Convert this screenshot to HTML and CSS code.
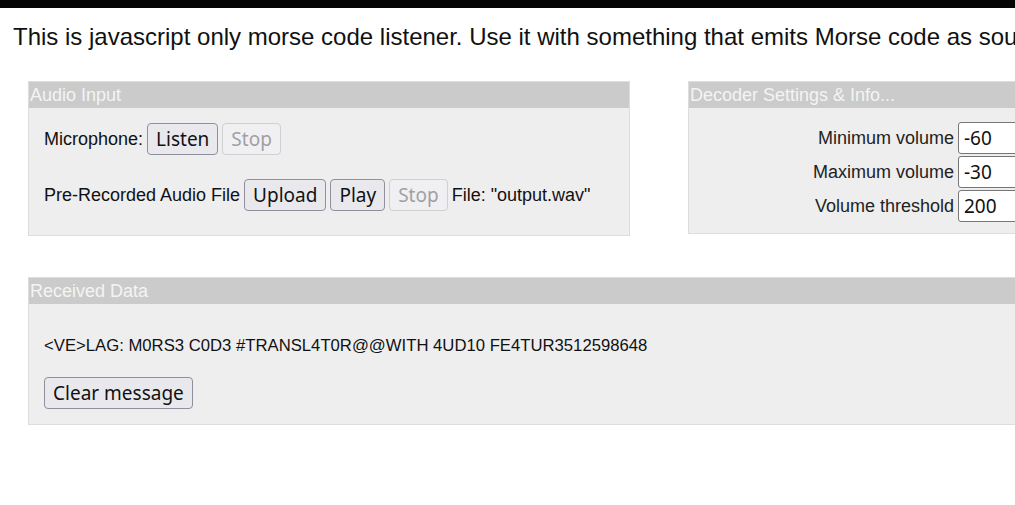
FILE: index.html
```html
<!DOCTYPE html>
<html>
<head>
<meta charset="utf-8">
<link rel="stylesheet" href="styles.css">
</head>
<body>
<div class="topbar"></div>
<p class="intro">This is javascript only morse code listener. Use it with something that emits Morse code as sound. Just let it listen and it will decode the message.</p>
<div class="row">
  <section class="panel audio">
    <div class="panel-head">Audio Input</div>
    <div class="panel-body">
      <div class="line">Microphone: <button class="btn">Listen</button> <button class="btn" disabled>Stop</button></div>
      <div class="line">Pre-Recorded Audio File <button class="btn">Upload</button> <button class="btn">Play</button> <button class="btn" disabled>Stop</button> File: "output.wav"</div>
    </div>
  </section>
  <section class="panel decoder">
    <div class="panel-head">Decoder Settings &amp; Info...</div>
    <div class="panel-body settings">
      <label class="field-label" for="minv">Minimum volume</label><input id="minv" class="num" type="text" value="-60">
      <label class="field-label" for="maxv">Maximum volume</label><input id="maxv" class="num" type="text" value="-30">
      <label class="field-label" for="thr">Volume threshold</label><input id="thr" class="num" type="text" value="200">
    </div>
  </section>
</div>
<section class="panel received">
  <div class="panel-head">Received Data</div>
  <div class="panel-body">
    <div class="message">&lt;VE&gt;LAG: M0RS3 C0D3 #TRANSL4T0R@@WITH 4UD10 FE4TUR3512598648</div>
    <button class="btn clear">Clear message</button>
  </div>
</section>
</body>
</html>
```
FILE: styles.css
```css
html, body {
  overflow: hidden;
}
body {
  margin: 0;
  background: #fff;
  font-family: "Liberation Sans", Arial, sans-serif;
  font-size: 18px;
  color: #111;
}
.topbar {
  height: 8px;
  background: #050505;
}
.intro {
  margin: 15px 0 0 13px;
  font-size: 24px;
  white-space: nowrap;
  line-height: 28px;
}
.row {
  display: flex;
  align-items: flex-start;
  gap: 58px;
  margin: 30px 0 0 28px;
  width: 1400px;
}
.panel {
  background: #eeeeee;
  border: 1px solid #dddddd;
}
.audio {
  width: 600px;
}
.decoder {
  width: 500px;
}
.panel-head {
  background: #cbcbcb;
  color: #f4f4f4;
  height: 26px;
  line-height: 26px;
  padding-left: 1px;
  white-space: nowrap;
}
.panel-body {
  padding: 15px 15px 24px;
}
.line {
  display: flex;
  align-items: center;
  gap: 4px;
  white-space: nowrap;
}
.line + .line {
  margin-top: 24px;
}
.btn {
  font-family: "Noto Sans", sans-serif;
  font-size: 19px;
  color: #111;
  background: #e9e9ed;
  border: 1px solid #8f8f9d;
  border-radius: 4px;
  height: 32px;
  padding: 0 8px;
  line-height: 28px;
}
.btn:disabled {
  color: #a0a0a4;
  background: #f0f0f2;
  border-color: #cfcfd4;
}
.settings {
  display: grid;
  grid-template-columns: 265px 180px;
  column-gap: 4px;
  row-gap: 2px;
  align-items: center;
  padding: 14px 15px 11px 0;
}
.field-label {
  text-align: right;
  color: #222;
  white-space: nowrap;
}
.num {
  font-family: "Noto Sans", sans-serif;
  font-size: 19px;
  width: 180px;
  height: 32px;
  box-sizing: border-box;
  border: 1px solid #767676;
  border-radius: 3px;
  padding: 0 5px;
  background: #fff;
  color: #111;
}
.received {
  margin: 41px 0 0 28px;
  width: 1400px;
}
.received .panel-body {
  padding: 15px 15px 15px;
}
.message {
  margin-top: 17px;
  line-height: 20px;
  white-space: nowrap;
  font-size: 16.7px;
}
.clear {
  margin-top: 21px;
}
```
